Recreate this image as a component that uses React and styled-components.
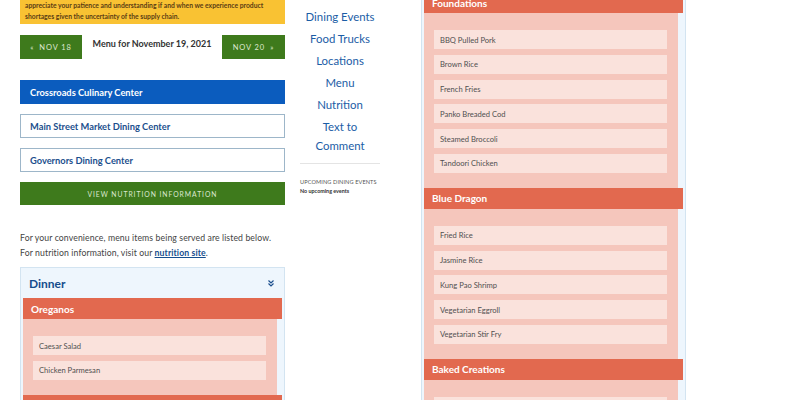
import React from "react";
import styled, { createGlobalStyle } from "styled-components";

const Global = createGlobalStyle`
  html, body { margin: 0; padding: 0; background: #fff; }
  body { font-family: Lato, "Noto Sans", sans-serif; overflow: hidden; }
  * { box-sizing: border-box; }
`;

const Page = styled.div`
  display: flex;
  align-items: flex-start;
  padding: 0 20px;
  width: 800px;
  height: 400px;
  overflow: hidden;
`;

const LeftCol = styled.div`
  width: 265px;
  flex: none;
  display: flex;
  flex-direction: column;
`;

const Banner = styled.div`
  background: #f9c233;
  color: #5b3d14;
  font-size: 6.75px;
  font-weight: 700;
  line-height: 10.5px;
  padding: 0 5px 3px;
  white-space: nowrap;
`;

const DateRow = styled.div`
  display: flex;
  justify-content: space-between;
  align-items: flex-start;
  margin-top: 11px;
`;

const DateBtn = styled.div`
  width: ${(p) => p.$w}px;
  height: 24px;
  background: #3e7a1c;
  color: #dfe9d2;
  font-size: 7.5px;
  letter-spacing: 0.9px;
  display: flex;
  align-items: center;
  justify-content: center;
  gap: 5px;
`;

const DateTitle = styled.div`
  font-size: 9px;
  font-weight: 700;
  color: #333;
  padding-top: 3px;
`;

const Hall = styled.div`
  height: 24px;
  margin-top: ${(p) => p.$mt}px;
  padding-left: 9px;
  display: flex;
  align-items: center;
  font-size: 9.3px;
  font-weight: 700;
  color: ${(p) => (p.$active ? "#fff" : "#1c4f8d")};
  background: ${(p) => (p.$active ? "#0b5cbe" : "#fff")};
  border: 1px solid ${(p) => (p.$active ? "#0b5cbe" : "#9db6c9")};
`;

const NutritionBtn = styled.div`
  height: 23px;
  margin-top: 10px;
  background: #3e7a1c;
  color: #dce8d0;
  font-size: 6.8px;
  letter-spacing: 0.95px;
  display: flex;
  align-items: center;
  justify-content: center;
`;

const Intro = styled.p`
  margin: 25px 0 0;
  font-size: 8.7px;
  line-height: 15px;
  color: #444;
  letter-spacing: 0.1px;
`;

const IntroLink = styled.a`
  color: #164e8e;
  font-weight: 700;
  text-decoration: underline;
`;

const MealCard = styled.div`
  margin-top: ${(p) => p.$mt}px;
  background: #eef6fd;
  border: 1px solid #d3e4f1;
  padding: 0 2px 0 2px;
`;

const MealHead = styled.div`
  height: 30px;
  display: flex;
  align-items: center;
  justify-content: space-between;
  padding: 0 7px 0 6px;
  font-size: 12px;
  font-weight: 700;
  color: #144d8c;
`;

const StationHead = styled.div`
  height: 21px;
  background: #e2694f;
  color: #fff;
  font-size: 10px;
  font-weight: 700;
  display: flex;
  align-items: center;
  padding-left: 8px;
`;

const StationBody = styled.div`
  background: #f5c6bc;
  margin-right: 5px;
  padding: 17px 11px 9px 10px;
`;

const Item = styled.div`
  height: 19px;
  margin-bottom: 5.8px;
  background: #fae2dc;
  color: #505050;
  font-size: 7.6px;
  display: flex;
  align-items: center;
  padding-left: 6px;
`;

const MidCol = styled.nav`
  width: 80px;
  flex: none;
  margin-left: 15px;
  padding-top: 7px;
  display: flex;
  flex-direction: column;
`;

const NavLink = styled.div`
  text-align: center;
  font-size: 11.4px;
  line-height: 19px;
  margin-bottom: 3px;
  color: #1b5da6;
`;

const Divider = styled.hr`
  border: 0;
  border-top: 1px solid #e4e4e4;
  margin: 5px 0 0;
  width: 100%;
`;

const EventsLabel = styled.div`
  margin-top: 14px;
  font-size: 5.6px;
  color: #555;
  letter-spacing: 0.1px;
`;

const EventsNone = styled.div`
  margin-top: 3px;
  font-size: 5.4px;
  font-weight: 700;
  color: #333;
`;

const RightCol = styled.div`
  width: 265px;
  flex: none;
  margin-left: 41px;
`;

const Chevron = () => (
  <svg width="8" height="8" viewBox="0 0 8 8" fill="none" stroke="#1c4f8d" strokeWidth="1.2">
    <path d="M1.5 1.5 L4 4 L6.5 1.5" />
    <path d="M1.5 4.5 L4 7 L6.5 4.5" />
  </svg>
);

const Station = ({ name, items }) => (
  <>
    <StationHead>{name}</StationHead>
    <StationBody>
      {items.map((i) => (
        <Item key={i}>{i}</Item>
      ))}
    </StationBody>
  </>
);

export default function App() {
  return (
    <>
      <Global />
      <Page>
        <LeftCol>
          <Banner>
            appreciate your patience and understanding if and when we experience product
            <br />
            shortages given the uncertainty of the supply chain.
          </Banner>
          <DateRow>
            <DateBtn $w={62}>
              <span>«</span>
              <span>NOV 18</span>
            </DateBtn>
            <DateTitle>Menu for November 19, 2021</DateTitle>
            <DateBtn $w={63}>
              <span>NOV 20</span>
              <span>»</span>
            </DateBtn>
          </DateRow>
          <Hall $active $mt={21}>Crossroads Culinary Center</Hall>
          <Hall $mt={10}>Main Street Market Dining Center</Hall>
          <Hall $mt={10}>Governors Dining Center</Hall>
          <NutritionBtn>VIEW NUTRITION INFORMATION</NutritionBtn>
          <Intro>
            For your convenience, menu items being served are listed below.
            <br />
            For nutrition information, visit our <IntroLink>nutrition site</IntroLink>.
          </Intro>
          <MealCard $mt={7}>
            <MealHead>
              <span>Dinner</span>
              <Chevron />
            </MealHead>
            <Station name="Oreganos" items={["Caesar Salad", "Chicken Parmesan"]} />
            <StationHead />
          </MealCard>
        </LeftCol>
        <MidCol>
          <NavLink>Dining Events</NavLink>
          <NavLink>Food Trucks</NavLink>
          <NavLink>Locations</NavLink>
          <NavLink>Menu</NavLink>
          <NavLink>Nutrition</NavLink>
          <NavLink>Text to Comment</NavLink>
          <Divider />
          <EventsLabel>UPCOMING DINING EVENTS</EventsLabel>
          <EventsNone>No upcoming events</EventsNone>
        </MidCol>
        <RightCol>
          <MealCard $mt={-9}>
            <Station
              name="Foundations"
              items={["BBQ Pulled Pork", "Brown Rice", "French Fries", "Panko Breaded Cod", "Steamed Broccoli", "Tandoori Chicken"]}
            />
            <Station
              name="Blue Dragon"
              items={["Fried Rice", "Jasmine Rice", "Kung Pao Shrimp", "Vegetarian Eggroll", "Vegetarian Stir Fry"]}
            />
            <Station name="Baked Creations" items={[""]} />
          </MealCard>
        </RightCol>
      </Page>
    </>
  );
}
